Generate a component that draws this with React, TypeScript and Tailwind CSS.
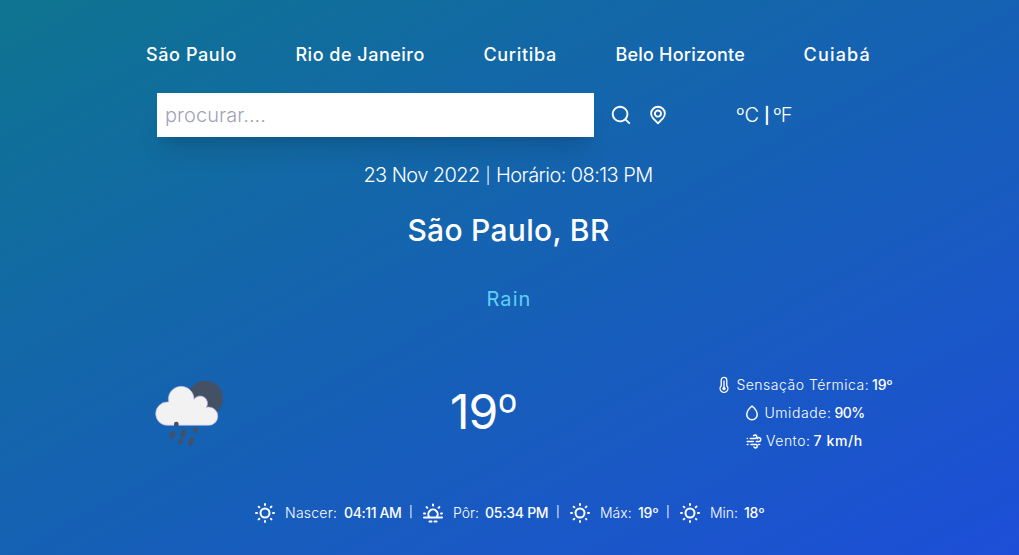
import type { ReactNode } from "react";

function Icon({ className, children }: { className: string; children: ReactNode }) {
  return (
    <svg viewBox="0 0 24 24" fill="currentColor" className={`shrink-0 ${className}`}>
      {children}
    </svg>
  );
}

function Sun() {
  return (
    <Icon className="size-6">
      <path d="M5.64,17l-.71.71a1,1,0,0,0,0,1.41,1,1,0,0,0,1.41,0l.71-.71A1,1,0,0,0,5.64,17ZM5,12a1,1,0,0,0-1-1H3a1,1,0,0,0,0,2H4A1,1,0,0,0,5,12Zm7-7a1,1,0,0,0,1-1V3a1,1,0,0,0-2,0V4A1,1,0,0,0,12,5ZM5.64,7.05a1,1,0,0,0,.7.29,1,1,0,0,0,.71-.29,1,1,0,0,0,0-1.41l-.71-.71A1,1,0,0,0,4.93,6.34Zm12,.29a1,1,0,0,0,.7-.29l.71-.71a1,1,0,1,0-1.41-1.41L17,5.64a1,1,0,0,0,0,1.41A1,1,0,0,0,17.66,7.34ZM21,11H20a1,1,0,0,0,0,2h1a1,1,0,0,0,0-2Zm-9,8a1,1,0,0,0-1,1v1a1,1,0,0,0,2,0V20A1,1,0,0,0,12,19ZM18.36,17A1,1,0,0,0,17,18.36l.71.71a1,1,0,0,0,1.41,0,1,1,0,0,0,0-1.41ZM12,6.5A5.5,5.5,0,1,0,17.5,12,5.51,5.51,0,0,0,12,6.5Zm0,9A3.5,3.5,0,1,1,15.5,12,3.5,3.5,0,0,1,12,15.5Z" />
    </Icon>
  );
}

function Sunset() {
  return (
    <Icon className="size-6">
      <g fill="none" stroke="currentColor" strokeWidth="2" strokeLinecap="round">
        <path d="M3 16.500h18M10.500 20.500h-2M15.500 20.500h-2M3 12.500h1M20 12.500h1M12 3.500v1M5.600 6.100l.7.700M18.400 6.100l-.7.700" />
        <path d="M8.200 16a4.700 4.700 0 1 1 7.600 0" />
      </g>
    </Icon>
  );
}

function Search() {
  return (
    <Icon className="size-[22px]">
      <path d="M21.71,20.29,18,16.61A9,9,0,1,0,16.61,18l3.68,3.68a1,1,0,0,0,1.42,0A1,1,0,0,0,21.71,20.29ZM11,18a7,7,0,1,1,7-7A7,7,0,0,1,11,18Z" />
    </Icon>
  );
}

function MapMarker() {
  return (
    <Icon className="size-[22px]">
      <path d="M18,4.48a8.45,8.45,0,0,0-12,12l5.27,5.28a1,1,0,0,0,1.42,0L18,16.43A8.45,8.45,0,0,0,18,4.48ZM16.57,15,12,19.59,7.43,15a6.46,6.46,0,1,1,9.14,0ZM9,7.41a4.32,4.32,0,0,0,0,6.1,4.31,4.31,0,0,0,7.36-3,4.24,4.24,0,0,0-1.26-3.05A4.3,4.3,0,0,0,9,7.41Zm4.69,4.68a2.33,2.33,0,1,1,.67-1.63A2.33,2.33,0,0,1,13.64,12.09Z" />
    </Icon>
  );
}

function Thermometer() {
  return (
    <Icon className="size-[18px]">
      <g fill="none" stroke="currentColor" strokeWidth="1.800">
        <path d="M8.300 13V5.500a3.700 3.700 0 0 1 7.400 0V13a5.200 5.200 0 1 1-7.400 0z" />
        <path d="M12 6.500v9" strokeLinecap="round" />
      </g>
      <circle cx="12" cy="16.800" r="2.200" />
    </Icon>
  );
}

function Drop() {
  return (
    <Icon className="size-[18px]">
      <path
        d="M12 2.700C8.500 5.700 5 9.800 5 14a7 7 0 0 0 14 0c0-4.200-3.500-8.300-7-11.300z"
        fill="none"
        stroke="currentColor"
        strokeWidth="2"
        strokeLinejoin="round"
      />
    </Icon>
  );
}

function Wind() {
  return (
    <Icon className="size-[18px]">
      <g fill="none" stroke="currentColor" strokeWidth="2" strokeLinecap="round">
        <path d="M7 8.500h6.500a2.300 2.300 0 1 0-2-3.500M3 8.500h.01" />
        <path d="M3 12.500h8M15 12.500h3.500a2.500 2.500 0 1 0-2.200-3.600" />
        <path d="M3 16.500h1M8 16.500h6a2.300 2.300 0 1 1-2 3.400M18 16.500h1.500" />
      </g>
    </Icon>
  );
}

function RainCloud() {
  return (
    <svg viewBox="0 0 300 270" className="h-[90px] w-[100px] shrink-0">
      <circle cx="196" cy="100" r="53" fill="#445064" />
      <path
        d="M82 181a35 35 0 0 1 0-70q2 0 4 .3A38.500 38.500 0 1 1 162 103a22 22 0 0 1 37 24q3-1 7-1a27.500 27.500 0 0 1 0 55z"
        fill="#f2f2f2"
        stroke="#b9b4e0"
        strokeWidth="2"
      />
      <path
        d="M109 177v2M99 205l-4 9M132 201l-4 9M167 195l-1 2M122 229l-1 1M155 225l-4 9"
        fill="none"
        stroke="#445064"
        strokeWidth="14"
        strokeLinecap="round"
      />
    </svg>
  );
}

function Detail({ icon, children }: { icon: ReactNode; children: ReactNode }) {
  return (
    <div className="flex h-7 items-center justify-center gap-[3px] text-sm font-light">
      {icon}
      <div className="flex gap-[3px]">{children}</div>
    </div>
  );
}

function Bar() {
  return <span className="w-3 text-[11px] font-normal">|</span>;
}

export default function App() {
  return (
    <main className="h-[555px] w-full overflow-hidden bg-linear-to-br/srgb from-[#0e7490] to-[#1d4ed8] pt-[41px] font-['Inter',sans-serif] whitespace-nowrap text-white">
      <nav className="ml-[146px] flex h-7 w-[725px] items-center justify-between text-lg font-medium">
        <button className="tracking-[0.6px]">São Paulo</button>
        <button className="tracking-[0.5px]">Rio de Janeiro</button>
        <button className="tracking-[0.7px]">Curitiba</button>
        <button className="tracking-[0.2px]">Belo Horizonte</button>
        <button className="tracking-[1.2px]">Cuiabá</button>
      </nav>

      <section className="mt-6 ml-[157px] flex h-11 items-center">
        <input
          type="text"
          placeholder="procurar...."
          className="h-11 w-[437px] bg-white p-2 text-xl font-light tracking-[0.05px] text-gray-700 shadow-xl outline-none placeholder:text-[#a0a2b8]"
        />
        <div className="ml-4 flex gap-[15px]">
          <Search />
          <MapMarker />
        </div>
        <div className="ml-[67px] flex items-center text-xl font-light">
          <span className="w-[28px]">ºC</span>
          <span className="w-[9px] text-base font-semibold">|</span>
          <span className="tracking-[-0.8px]">ºF</span>
        </div>
      </section>

      <p className="mt-6 flex h-7 items-center justify-center pr-[3px] text-xl leading-7 font-light tracking-[-0.58px]">
        <span>23 Nov 2022</span>
        <span className="px-1.5 text-base">|</span>
        <span>Horário: 08:13 PM</span>
      </p>
      <h1 className="mt-[23px] h-9 pr-0.5 text-center text-3xl leading-9 font-medium tracking-[0.3px]">
        São Paulo, BR
      </h1>
      <p className="mt-[39px] h-6 pr-px text-center text-xl leading-6 tracking-[1.1px] text-[#5fd0f5]">Rain</p>

      <section className="mt-[54px] ml-[140px] flex h-[90px] items-center">
        <RainCloud />
        <p className="ml-[210px] w-[239px] pt-[3px] text-5xl leading-[94px] tracking-[-1px]">
          19<span className="font-light">º</span>
        </p>
        <div className="mt-1.5 h-[84px] w-[230px]">
          <Detail icon={<Thermometer />}>
            <span className="tracking-[0.5px]">Sensação Térmica:</span>
            <span className="font-medium tracking-[-0.2px]">19º</span>
          </Detail>
          <Detail icon={<Drop />}>
            <span className="tracking-[0.6px]">Umidade:</span>
            <span className="font-medium tracking-[-0.6px]">90%</span>
          </Detail>
          <Detail icon={<Wind />}>
            <span className="tracking-[0.5px]">Vento:</span>
            <span className="font-medium tracking-[0.65px]">7 km/h</span>
          </Detail>
        </div>
      </section>

      <section className="mt-[46px] ml-[253px] flex h-6 items-center text-sm font-light">
        <Sun />
        <span className="ml-2 w-[59px] tracking-[0.25px]">Nascer:</span>
        <span className="w-[65px] font-medium tracking-[-0.4px]">04:11 AM</span>
        <Bar />
        <Sunset />
        <span className="ml-2 w-[32px]">Pôr:</span>
        <span className="w-[71px] font-medium tracking-[-0.25px]">05:34 PM</span>
        <Bar />
        <Sun />
        <span className="ml-2 w-[38px]">Máx:</span>
        <span className="w-[28px] font-medium tracking-[-0.2px]">19º</span>
        <Bar />
        <Sun />
        <span className="ml-2 w-[34px]">Min:</span>
        <span className="font-medium tracking-[-0.2px]">18º</span>
      </section>
    </main>
  );
}
